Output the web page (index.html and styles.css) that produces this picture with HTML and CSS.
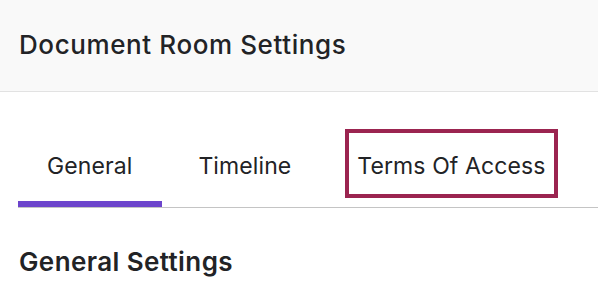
FILE: index.html
```html
<!DOCTYPE html>
<html lang="en">
<head>
    <meta charset="UTF-8">
    <meta name="viewport" content="width=device-width, initial-scale=1.0">
    <title>Document Room Settings</title>
    <link rel="stylesheet" href="styles.css">
</head>
<body>
    <div class="page-header">
        <h1>Document Room Settings</h1>
    </div>

    <div class="tabs">
        <div class="tab active"><span class="tab-label">General</span></div>
        <div class="tab"><span class="tab-label">Timeline</span></div>
        <div class="tab"><span class="tab-label focused">Terms Of Access</span></div>
    </div>

    <div class="section">
        <h2>General Settings</h2>
    </div>
</body>
</html>
```

FILE: styles.css
```css
body {
    font-family: Inter, "Noto Sans", sans-serif;
    background-color: #fff;
    color: #222326;
    margin: 0;
}

.page-header {
    background-color: #f9f9f9;
    border-bottom: 1px solid #e2e2e2;
    height: 91px;
    padding: 0 19px;
    display: flex;
    align-items: center;
}

.page-header h1 {
    margin: 0 0 2px;
    font-size: 26px;
    font-weight: 500;
    letter-spacing: 0.6px;
}

.tabs {
    display: flex;
    gap: 7px;
    margin: 37px 0 0 18px;
    border-bottom: 1px solid #c4c4c4;
}

.tab {
    padding: 0 17px 3px;
    border-bottom: 6px solid transparent;
    cursor: pointer;
}

.tab.active {
    border-bottom-color: #6c44cc;
}

.tab-label {
    display: block;
    font-size: 23px;
    line-height: 26px;
    letter-spacing: 0.1px;
    padding: 20px 9px 15px 8px;
    border: 4px solid transparent;
}

.tab-label.focused {
    border-color: #9b2450;
}

.section {
    padding: 0 19px;
}

.section h2 {
    margin: 38px 0 0;
    font-size: 26px;
    font-weight: 600;
    letter-spacing: 0.4px;
}
```
